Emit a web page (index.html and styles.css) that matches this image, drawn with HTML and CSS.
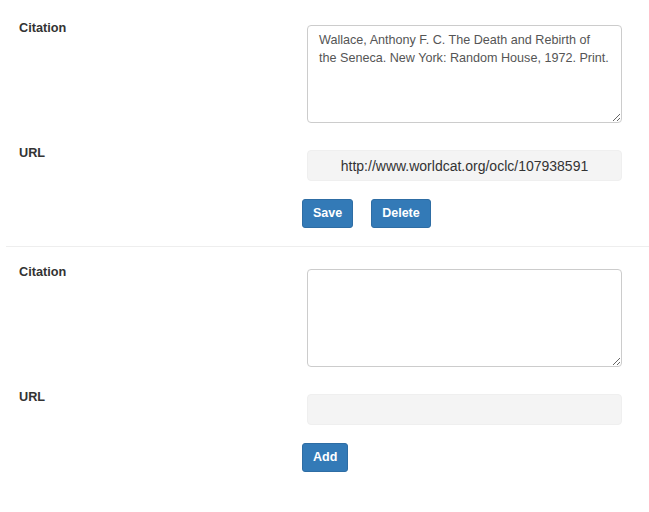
FILE: index.html
```html
<!DOCTYPE html>
<html>
<head>
<meta charset="utf-8">
<link rel="stylesheet" href="styles.css">
</head>
<body>
<div class="page">
  <form class="entry">
    <div class="row">
      <label class="label">Citation</label>
      <div class="control"><textarea class="area">Wallace, Anthony F. C. The Death and Rebirth of the Seneca. New York: Random House, 1972. Print.</textarea></div>
    </div>
    <div class="row row-url">
      <label class="label">URL</label>
      <div class="control"><input class="url" type="text" readonly value="http://www.worldcat.org/oclc/107938591"></div>
    </div>
    <div class="actions">
      <button type="button" class="btn">Save</button>
      <button type="button" class="btn">Delete</button>
    </div>
  </form>
  <hr class="sep">
  <form class="entry">
    <div class="row">
      <label class="label">Citation</label>
      <div class="control"><textarea class="area"></textarea></div>
    </div>
    <div class="row row-url">
      <label class="label">URL</label>
      <div class="control"><input class="url" type="text" readonly value=""></div>
    </div>
    <div class="actions">
      <button type="button" class="btn">Add</button>
    </div>
  </form>
</div>
</body>
</html>
```
FILE: styles.css
```css
html, body {
  margin: 0;
  padding: 0;
  background: #fff;
}
body {
  font-family: "Liberation Sans", Arial, sans-serif;
  font-size: 13px;
  color: #333;
}
.page {
  width: 649px;
  padding-top: 19px;
}
.entry {
  margin: 0;
}
.row {
  display: flex;
  align-items: flex-start;
}
.row-url {
  margin-top: 21px;
}
.label {
  box-sizing: border-box;
  width: 307px;
  padding-left: 19px;
  font-weight: bold;
  font-size: 12.7px;
  line-height: 18px;
  color: #333;
}
.control {
  width: 315px;
  padding-top: 6px;
}
.area {
  display: block;
  box-sizing: border-box;
  width: 315px;
  height: 98px;
  margin: 0;
  padding: 5px 11px;
  border: 1px solid #ccc;
  border-radius: 4px;
  font-family: "Liberation Sans", Arial, sans-serif;
  font-size: 12.6px;
  line-height: 18px;
  color: #555;
  background: #fff;
  resize: vertical;
  outline: none;
}
.url {
  display: block;
  box-sizing: border-box;
  width: 315px;
  height: 31px;
  margin: 0;
  padding: 4px 12px;
  border: 1px solid #efefef;
  border-radius: 4px;
  background: #f4f4f4;
  font-family: "Liberation Sans", Arial, sans-serif;
  font-size: 14px;
  color: #333;
  text-align: center;
  outline: none;
}
.actions {
  display: flex;
  gap: 18px;
  padding-left: 302px;
  margin-top: 18px;
}
.btn {
  box-sizing: border-box;
  height: 29px;
  padding: 0 10px;
  border: 1px solid #2e6da4;
  border-radius: 3px;
  background: #337ab7;
  color: #fff;
  font-family: "Liberation Sans", Arial, sans-serif;
  font-size: 12.5px;
  font-weight: bold;
  line-height: 27px;
  cursor: pointer;
}
.sep {
  margin: 18px 0 16px 6px;
  border: 0;
  border-top: 1px solid #eee;
  height: 0;
}
```
